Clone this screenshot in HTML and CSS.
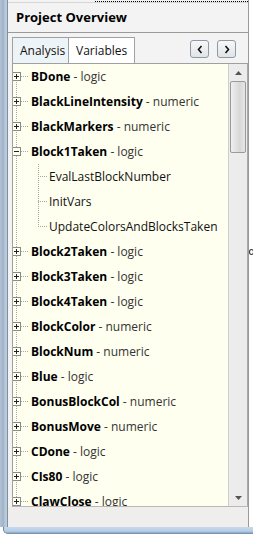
FILE: index.html
```html
<!DOCTYPE html>
<html lang="en">
	<head>
		<meta charset="UTF-8" />
		<meta name="viewport" content="width=device-width, initial-scale=1.0" />
		<title>Project Overview</title>
		<link rel="stylesheet" href="styles.css">
	</head>
	<body>
		<div class="window">
			<div class="main">
				<div class="edgeLeft"></div>
				<div class="panel">
					<div class="topStrip"><span class="focusLine"></span></div>
					<div class="title">Project Overview</div>
					<div class="tabBar">
						<div class="tab active">Analysis</div>
						<div class="tab">Variables</div>
						<div class="navBtns">
							<button class="navBtn" aria-label="Previous">
								<svg width="8" height="9" viewBox="0 0 8 9"><path d="M5.5 1 L2.5 4.5 L5.5 8" fill="none" stroke="#111" stroke-width="1.6"/></svg>
							</button>
							<button class="navBtn" aria-label="Next">
								<svg width="8" height="9" viewBox="0 0 8 9"><path d="M2.5 1 L5.5 4.5 L2.5 8" fill="none" stroke="#111" stroke-width="1.6"/></svg>
							</button>
						</div>
					</div>
					<div class="treeBox">
						<div class="tree">
							<div class="node"><span class="box plus"></span><span class="hline"></span><b>BDone</b>&nbsp;<span class="type">- logic</span></div>
							<div class="node"><span class="box plus"></span><span class="hline"></span><b>BlackLineIntensity</b>&nbsp;<span class="type">- numeric</span></div>
							<div class="node"><span class="box plus"></span><span class="hline"></span><b>BlackMarkers</b>&nbsp;<span class="type">- numeric</span></div>
							<div class="node"><span class="box"></span><span class="hline"></span><b>Block1Taken</b>&nbsp;<span class="type">- logic</span></div>
							<div class="children">
								<div class="child"><span class="hline"></span>EvalLastBlockNumber</div>
								<div class="child"><span class="hline"></span>InitVars</div>
								<div class="child"><span class="hline"></span>UpdateColorsAndBlocksTaken</div>
							</div>
							<div class="node"><span class="box plus"></span><span class="hline"></span><b>Block2Taken</b>&nbsp;<span class="type">- logic</span></div>
							<div class="node"><span class="box plus"></span><span class="hline"></span><b>Block3Taken</b>&nbsp;<span class="type">- logic</span></div>
							<div class="node"><span class="box plus"></span><span class="hline"></span><b>Block4Taken</b>&nbsp;<span class="type">- logic</span></div>
							<div class="node"><span class="box plus"></span><span class="hline"></span><b>BlockColor</b>&nbsp;<span class="type">- numeric</span></div>
							<div class="node"><span class="box plus"></span><span class="hline"></span><b>BlockNum</b>&nbsp;<span class="type">- numeric</span></div>
							<div class="node"><span class="box plus"></span><span class="hline"></span><b>Blue</b>&nbsp;<span class="type">- logic</span></div>
							<div class="node"><span class="box plus"></span><span class="hline"></span><b>BonusBlockCol</b>&nbsp;<span class="type">- numeric</span></div>
							<div class="node"><span class="box plus"></span><span class="hline"></span><b>BonusMove</b>&nbsp;<span class="type">- numeric</span></div>
							<div class="node"><span class="box plus"></span><span class="hline"></span><b>CDone</b>&nbsp;<span class="type">- logic</span></div>
							<div class="node"><span class="box plus"></span><span class="hline"></span><b>CIs80</b>&nbsp;<span class="type">- logic</span></div>
							<div class="node"><span class="box plus"></span><span class="hline"></span><b>ClawClose</b>&nbsp;<span class="type">- logic</span></div>
						</div>
						<div class="scrollbar">
							<div class="arrow">
								<svg width="7" height="4" viewBox="0 0 7 4"><path d="M0 4 L3.5 0 L7 4 Z" fill="#555"/></svg>
							</div>
							<div class="thumb"></div>
							<div class="track"></div>
							<div class="arrow">
								<svg width="7" height="4" viewBox="0 0 7 4"><path d="M0 0 L3.5 4 L7 0 Z" fill="#555"/></svg>
							</div>
						</div>
					</div>
					<div class="statusBar"></div>
				</div>
				<div class="edgeRight"><span class="grip"></span></div>
			</div>
			<div class="edgeBottom"></div>
		</div>
	</body>
</html>
```

FILE: styles.css
```css
* {
	padding: 0;
	margin: 0;
	box-sizing: border-box;
}
body {
	width: 253px;
	height: 534px;
	overflow: hidden;
	background: #fff;
	font-family: "Open Sans", "Noto Sans", sans-serif;
	font-size: 12px;
	color: #000;
}
.window {
	display: flex;
	flex-direction: column;
	height: 534px;
}
.main {
	display: flex;
	height: 527px;
}
.edgeLeft {
	width: 8px;
	background: linear-gradient(to right, #b4c3d4, #9fb3c9 40%, #c3d2e2 80%, #5e6e80);
}
.panel {
	width: 240px;
	display: flex;
	flex-direction: column;
	background: #f3f3f3;
}
.topStrip {
	height: 3px;
	border-bottom: 1px solid #d6d6d6;
	display: flex;
	justify-content: flex-end;
}
.focusLine {
	width: 153px;
	height: 1px;
	margin-top: 1px;
	border-top: 1px dotted #000;
}
.title {
	height: 30px;
	padding: 5px 0 0 8px;
	font-size: 13px;
	font-weight: bold;
	border-bottom: 1px solid #9a9a9a;
}
.tabBar {
	display: flex;
	align-items: flex-end;
	height: 30px;
	padding-left: 4px;
}
.tab {
	height: 26px;
	padding: 4px 7px 0 7px;
	font-size: 12px;
	background: #fff;
	border: 1px solid #a0a0a0;
	border-bottom: none;
	color: #111;
}
.tab.active {
	width: 57px;
	background: #edf4f7;
}
.tab + .tab {
	border-left: none;
}
.navBtns {
	display: flex;
	gap: 8px;
	margin-left: auto;
	margin-right: 12px;
	margin-bottom: 5px;
}
.navBtn {
	width: 19px;
	height: 18px;
	display: flex;
	align-items: center;
	justify-content: center;
	border: 1px solid #8d9aa6;
	border-radius: 3px;
	background: linear-gradient(#f6f7f8, #e1e4e7);
}
.treeBox {
	flex: 1;
	display: flex;
	margin-left: 4px;
	border: 1px solid #a0a0a0;
	border-right: none;
	border-bottom-color: #b8b8b8;
	background: #fffff0;
	overflow: hidden;
}
.tree {
	flex: 1;
	background-image: repeating-linear-gradient(to bottom, #a8a8a8 0 1px, transparent 1px 2px);
	background-size: 1px 100%;
	background-position: 3px 12px;
	background-repeat: no-repeat;
	overflow: hidden;
}
.node,
.child {
	height: 25px;
	flex-shrink: 0;
	display: flex;
	align-items: center;
	white-space: nowrap;
	font-size: 12px;
}
.node b {
	font-weight: bold;
	color: #000;
}
.type {
	color: #333;
}
.box {
	position: relative;
	width: 9px;
	height: 9px;
	margin-left: -1px;
	border: 1px solid #8a8a8a;
	background: #fffff0;
}
.box::before {
	content: "";
	position: absolute;
	left: 1px;
	top: 3px;
	width: 5px;
	height: 1px;
	background: #222;
}
.box.plus::after {
	content: "";
	position: absolute;
	left: 3px;
	top: 1px;
	width: 1px;
	height: 5px;
	background: #222;
}
.hline {
	width: 7px;
	height: 1px;
	margin-right: 3px;
	border-top: 1px dotted #a8a8a8;
}
.children {
	padding-left: 25px;
	background-image: repeating-linear-gradient(to bottom, #a8a8a8 0 1px, transparent 1px 2px);
	background-size: 1px 62px;
	background-position: 25px 0;
	background-repeat: no-repeat;
}
.child {
	color: #111;
}
.child .hline {
	width: 9px;
	margin-right: 2px;
}
.scrollbar {
	width: 20px;
	display: flex;
	flex-direction: column;
	background: #ececec;
	border-left: 1px solid #cfcfcf;
	border-right: 1px solid #a9a9a9;
}
.arrow {
	height: 17px;
	display: flex;
	align-items: center;
	justify-content: center;
}
.thumb {
	height: 72px;
	margin: 0 1px;
	border: 1px solid #9a9a9a;
	border-radius: 2px;
	background: linear-gradient(to right, #efefef, #d8d8d8 60%, #e6e6e6);
}
.track {
	flex: 1;
}
.statusBar {
	height: 20px;
	background: #f0eded;
}
.edgeRight {
	width: 5px;
	position: relative;
	border-left: 1px solid #9b9b9b;
	background: #fff;
}
.grip {
	position: absolute;
	left: 0;
	top: 249px;
	width: 5px;
	height: 6px;
	border: 1px solid #333;
	border-radius: 50%;
}
.edgeBottom {
	height: 7px;
	margin-left: 3px;
	border-bottom-left-radius: 5px;
	background: linear-gradient(#c6d9ee, #b6cde6 60%, #6f8aa8);
	border-left: 1px solid #6e7f92;
}
```
